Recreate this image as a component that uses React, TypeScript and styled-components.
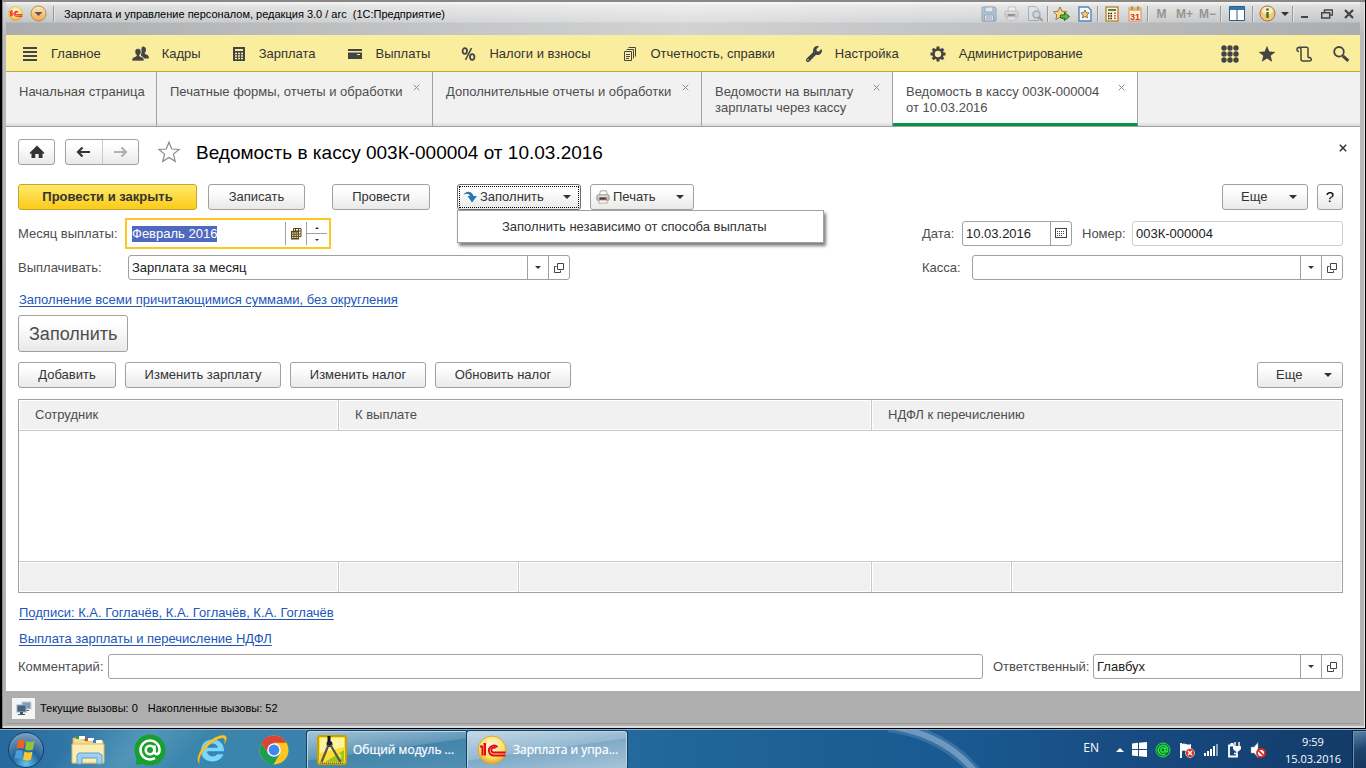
import React, { useEffect, useRef } from 'react';
import styled, { createGlobalStyle, css } from 'styled-components';
import { FaWrench } from 'react-icons/fa';

const GlobalStyle = createGlobalStyle`
  * { box-sizing: border-box; }
  body { margin: 0; background: #000; }
  body, button, input, select, table {
    font-family: "Liberation Sans", Arial, sans-serif;
    font-size: 13px;
    line-height: 16px;
    color: #333;
  }
  button, input, select { margin: 0; padding: 0; }
  svg { display: block; flex: none; }
`;

const Page = styled.div`
  display: flex;
  flex-direction: column;
  min-height: 100vh;
`;

/* ---------- window frame ---------- */

const Window = styled.div`
  flex: 1;
  display: flex;
  flex-direction: column;
  padding: 2px 5px 4px 4px;
  border: solid #000;
  border-width: 0 1px 1px 2px;
  background: linear-gradient(#d8d9da, #b9babc 36px, #b2afb0);
  box-shadow: inset 0 2px 0 #8b8688, inset 1px 0 0 #8b8688, inset -1px 0 0 #e2e2e2, inset 0 -2px 0 #dcdcdc;
`;

const TitleBar = styled.header`
  display: flex;
  align-items: center;
  height: 33px;
  padding: 0 1px 10px 1px;
  background:
    linear-gradient(90deg, rgba(255, 255, 255, 0) 0%, rgba(255, 255, 255, 0.45) 50%, rgba(255, 255, 255, 0) 100%),
    linear-gradient(#f4f5f5 0, #dcdddd 4px, #d0d1d2 12px, #c2c4c5 20px, #acadaf 21px, #acadaf 100%);
`;

const BarDivider = styled.span`
  width: 2px;
  height: 16px;
  margin: 0 1px;
  border-left: 1px solid #999a9d;
  border-right: 1px solid #e4e4e5;
`;

const WindowTitle = styled.h1`
  flex: 1;
  margin: 0;
  padding-left: 8px;
  font-size: 11px;
  font-weight: 400;
  color: #000;
  white-space: pre;
  overflow: hidden;
`;

const TitleButton = styled.button<{ $w?: number; $faded?: boolean }>`
  display: flex;
  align-items: center;
  justify-content: center;
  width: ${p => p.$w ?? 23}px;
  height: 20px;
  border: 0;
  background: none;
  font-size: 12px;
  font-weight: 700;
  color: #9b948e;
  opacity: ${p => (p.$faded ? 0.45 : 1)};
`;

/* ---------- section menu ---------- */

const SectionBar = styled.nav`
  display: flex;
  align-items: center;
  gap: 31px;
  height: 37px;
  padding: 1px 10px 0 16px;
  background: #fbed9e;
  border-bottom: 1px solid #bfa834;
`;

const SectionLink = styled.a`
  display: flex;
  align-items: center;
  gap: 13px;
  color: #333;
  text-decoration: none;
  white-space: nowrap;
`;

const SectionTools = styled.div`
  display: flex;
  gap: 19px;
  margin-left: auto;
`;

const IconButton = styled.button`
  display: flex;
  align-items: center;
  justify-content: center;
  min-width: 18px;
  height: 18px;
  border: 0;
  background: none;
`;

/* ---------- page tabs ---------- */

const TabBar = styled.div`
  display: flex;
  height: 55px;
  background: linear-gradient(#f1f1f1 50px, #dadada);
  border-bottom: 1px solid #a0a0a0;
`;

const Tab = styled.div<{ $w: number; $active?: boolean; $fixed?: boolean }>`
  display: flex;
  justify-content: space-between;
  flex: 0 1 ${p => p.$w}px;
  padding: 12px ${p => (p.$fixed ? 11 : 12)}px 0 13px;
  border-right: 1px solid #a0a0a0;
  color: #4d4d4d;
  ${p => p.$active && css`
    background: #fff;
    border-bottom: 3px solid #009646;
  `}
`;

const TabTitle = styled.span`
  white-space: pre;
`;

const CloseButton = styled.button`
  width: 7px;
  height: 7px;
  border: 0;
  background: none;
`;

/* ---------- document form ---------- */

const Form = styled.main`
  flex: 1;
  display: flex;
  flex-direction: column;
  padding: 12px 17px 12px 12px;
  background: #fff;
`;

const Row = styled.div<{ $top?: number; $gap?: number }>`
  display: flex;
  align-items: center;
  gap: ${p => p.$gap ?? 9}px;
  margin-top: ${p => p.$top ?? 0}px;
`;

const HeadRow = styled(Row)`
  margin-right: -4px;
`;

const DocClose = styled(CloseButton)`
  width: 8px;
  height: 16px;
  padding-bottom: 8px;
`;

const Spacer = styled.span<{ $w?: number }>`
  flex: ${p => (p.$w ? `0 0 ${p.$w}px` : '1')};
`;

const buttonFace = css`
  border: 1px solid #a0a0a0;
  border-radius: 3px;
  background: linear-gradient(#fff 20%, #e9e9e9);
`;

const Button = styled.button<{ $w: number; $pressed?: boolean; $primary?: boolean; $split?: boolean }>`
  display: flex;
  align-items: center;
  justify-content: ${p => (p.$split ? 'flex-start' : 'center')};
  gap: 3px;
  width: ${p => p.$w}px;
  height: 26px;
  padding: ${p => (p.$split ? '0 9px 0 5px' : '0')};
  ${buttonFace}
  white-space: nowrap;
  ${p => p.$primary && css`
    font-weight: 700;
    border-color: #c9a32a;
    background: linear-gradient(#ffe96a, #fbcb1a);
  `}
  ${p => p.$pressed && css`
    border-color: #6e6e6e;
    outline: 1px dotted #000;
    outline-offset: -3px;
  `}
`;

const MoreButton = styled(Button)`
  padding: 0 10px 0 18px;
  justify-content: space-between;
`;

const HelpButton = styled(Button)`
  font-size: 15px;
  color: #000;
`;

const BigButton = styled.button`
  align-self: flex-start;
  height: 37px;
  margin-top: 7px;
  padding: 0 10px;
  ${buttonFace}
  font-size: 18px;
  line-height: 22px;
  color: #4d4d4d;
`;

const ButtonLabel = styled.span<{ $grow?: boolean }>`
  ${p => p.$grow && css`
    flex: 1;
    text-align: left;
  `}
`;

const HomeButton = styled.button`
  display: flex;
  align-items: center;
  justify-content: center;
  width: 37px;
  height: 26px;
  ${buttonFace}
`;

const NavPair = styled.div`
  display: flex;
  width: 74px;
  height: 26px;
  margin: 0 9px 0 1px;
  ${buttonFace}
`;

const NavHalf = styled.button`
  flex: 1;
  display: flex;
  align-items: center;
  justify-content: center;
  border: 0;
  background: none;
  & + & { border-left: 1px solid #c8c8c8; }
`;

const DocTitle = styled.h2`
  flex: 1;
  margin: 0 0 0 6px;
  padding-top: 2px;
  font-size: 19px;
  line-height: 24px;
  font-weight: 400;
  color: #000;
`;

const MenuAnchor = styled.div`
  position: relative;
`;

const DropMenu = styled.div`
  position: absolute;
  z-index: 2;
  top: 26px;
  left: 0;
  width: 367px;
  border: 1px solid #a0a0a0;
  background: #fff;
  box-shadow: 2px 3px 3px rgba(0, 0, 0, 0.5);
`;

const MenuItem = styled.button`
  display: block;
  width: 100%;
  height: 31px;
  padding: 0 44px;
  border: 0;
  background: none;
  text-align: left;
  white-space: nowrap;
`;

const Label = styled.label<{ $w?: number }>`
  width: ${p => (p.$w ? `${p.$w}px` : 'auto')};
  color: #4d4d4d;
  white-space: nowrap;
`;

const FieldBox = styled.div<{ $w?: number; $muted?: boolean; $active?: boolean }>`
  display: flex;
  flex: ${p => (p.$w ? 'none' : 1)};
  width: ${p => (p.$w ? `${p.$w}px` : 'auto')};
  height: 25px;
  border: 1px solid ${p => (p.$muted ? '#d0d0d0' : '#a0a0a0')};
  border-radius: 3px;
  background: #fff;
  ${p => p.$active && css`
    height: 31px;
    padding: 2px;
    border: 2px solid #fcc721;
    border-radius: 0;
  `}
`;

const fieldText = css`
  flex: 1;
  min-width: 0;
  width: 0;
  padding: 0 3px;
  border: 0;
  outline: 0;
  background: none;
  color: #222;
  appearance: none;
  &::selection { background: #5069c0; color: #fff; }
`;

const TextInput = styled.input`${fieldText}`;
const SelectInput = styled.select`${fieldText}`;

const FieldButton = styled.button`
  display: flex;
  align-items: center;
  justify-content: center;
  width: 21px;
  border: 0;
  border-left: 1px solid #a0a0a0;
  background: none;
`;

const Spinner = styled.div`
  display: flex;
  flex-direction: column;
  width: 21px;
  border-left: 1px solid #a0a0a0;
`;

const SpinButton = styled.button`
  flex: 1;
  display: flex;
  align-items: center;
  justify-content: center;
  border: 0;
  background: none;
  & + & { border-top: 1px solid #a0a0a0; }
`;

const FormLink = styled.a<{ $top: number }>`
  align-self: flex-start;
  margin: ${p => p.$top}px 0 0 1px;
  color: #2156b8;
  text-decoration: underline;
  text-underline-offset: 2px;
`;

/* ---------- employees table ---------- */

const Table = styled.table`
  width: 100%;
  margin-top: 11px;
  table-layout: fixed;
  border-collapse: separate;
  border-spacing: 0;
  border: 1px solid #a0a0a0;
`;

const Col = styled.col<{ $w?: number }>`
  width: ${p => (p.$w ? `${p.$w}px` : 'auto')};
`;

const HeadCell = styled.th`
  height: 31px;
  padding: 0 16px;
  border-bottom: 1px solid #c8c8c8;
  background: #f1f1f1;
  box-shadow: inset 0 0 0 1px #fff;
  font-weight: 400;
  text-align: left;
  color: #4d4d4d;
  & + & { border-left: 1px solid #c8c8c8; }
`;

const EmptyCell = styled.td`
  height: 130px;
  padding: 0;
`;

const FootCell = styled.td`
  height: 31px;
  padding: 0;
  border-top: 1px solid #c8c8c8;
  background: #f0f0f0;
  box-shadow: inset 0 0 0 1px #fff;
  & + & { border-left: 1px solid #c8c8c8; }
`;

/* ---------- status bar ---------- */

const StatusBar = styled.footer`
  display: flex;
  align-items: center;
  gap: 10px;
  height: 33px;
  padding: 2px 6px 0;
  background: #aeaeae;
  border-bottom: 1px solid #9a9a9a;
  font-size: 11px;
  color: #000;
`;

const StatusIcon = styled.span`
  display: flex;
  align-items: center;
  justify-content: center;
  width: 23px;
  height: 21px;
  margin-right: -5px;
  background: #f5f5f5;
`;

/* ---------- taskbar ---------- */

const Taskbar = styled.div`
  display: flex;
  align-items: center;
  height: 40px;
  border-top: 1px solid #7fb0cf;
  background:
    linear-gradient(135deg, transparent 60px, rgba(150, 200, 220, 0.25) 110px, transparent 150px),
    linear-gradient(90deg, #26699d 0%, #3c86ae 10%, #3a82ab 24%, #246a9c 45%, #1c5f94 60%, #1a5992 70%, #174a80 84%, #123a67 100%);
  font-family: "Open Sans", "Noto Sans", sans-serif;
  font-size: 12px;
  color: #fff;
`;

const Launchers = styled.div`
  display: flex;
  align-items: center;
  gap: 26px;
  padding: 0 15px 0 8px;
`;

const TaskIcon = styled.button`
  display: flex;
  align-items: center;
  justify-content: center;
  width: 36px;
  height: 38px;
  border: 0;
  background: none;
`;

const TaskButton = styled.button<{ $active?: boolean }>`
  display: flex;
  align-items: center;
  gap: 6px;
  width: 160px;
  height: 38px;
  padding: 0 9px;
  border: 1px solid #bcd5e4;
  border-radius: 2px;
  outline: 1px solid #143f60;
  background: ${p => (p.$active
    ? 'linear-gradient(172deg, #c3d8e6 0%, #94b9d1 48%, #7faac7 50%, #a5c4d8 100%)'
    : 'linear-gradient(172deg, #a5c5d8 0%, #6198b8 48%, #4585ab 50%, #5190b3 100%)')};
  font-family: inherit;
  font-size: 12px;
  color: #fff;
  text-shadow: 0 0 1px rgba(255, 255, 255, 0.6);
  white-space: nowrap;
`;

const Swoosh = styled.div`
  flex: 1;
  align-self: stretch;
  display: flex;
  justify-content: flex-end;
  padding-right: 95px;
  overflow: hidden;
`;

const Tray = styled.div`
  display: flex;
  align-items: center;
  gap: 8px;
`;

const Language = styled.span`
  margin: 0 9px 4px 0;
`;

const Clock = styled.time`
  width: 62px;
  margin-left: 8px;
  text-align: center;
  font-size: 11px;
  line-height: 17px;
`;

const ShowDesktop = styled.button`
  width: 14px;
  height: 40px;
  border: 1px solid #0b2747;
  border-right: 0;
  background: linear-gradient(160deg, #5d84a8, #1d4570 50%, #15345b);
  box-shadow: inset 1px 1px 0 #6d8fb0;
`;

/* ---------- drawings ---------- */

const ink = '#444';

const OneC = ({ size }: { size: number }) => (
  <svg width={size} height={size} viewBox="0 0 30 30">
    <defs>
      <radialGradient id="oneC" cx="0.5" cy="0.35" r="0.7">
        <stop offset="0" stopColor="#fffbe0" />
        <stop offset="0.6" stopColor="#fbe069" />
        <stop offset="1" stopColor="#dd9a16" />
      </radialGradient>
    </defs>
    <circle cx="15" cy="15" r="14" fill="url(#oneC)" stroke="#d9a63c" />
    <path d="M3 11.500h2.500v9M6.500 9h1.500v11.500" fill="none" stroke="#e1061b" strokeWidth="2" />
    <path d="M20.500 12.200a5 5 0 1 0-3.500 8.300h11.500M18.500 13.200a2.500 2.500 0 1 0-1.500 4.300h11.500" fill="none" stroke="#e1061b" strokeWidth="1.900" />
  </svg>
);

const RoundArrow = () => (
  <svg width="17" height="17" viewBox="0 0 17 17">
    <defs>
      <linearGradient id="roundArrow" x2="0" y2="1">
        <stop offset="0" stopColor="#fbe7c5" />
        <stop offset="1" stopColor="#f0a84a" />
      </linearGradient>
    </defs>
    <circle cx="8.500" cy="8.500" r="7.500" fill="url(#roundArrow)" stroke="#b98a50" />
    <path d="M4.500 7h8l-4 4z" fill="#5d564e" />
  </svg>
);

const FloppyIcon = () => (
  <svg width="16" height="16" viewBox="0 0 16 16">
    <path d="M1 1h13l1 1v13H1z" fill="#7ea3c4" stroke="#41688f" />
    <path d="M4 1h8v5H4zM3.500 9h9v6h-9z" fill="#e9f0f6" stroke="#41688f" />
    <path d="M5 11h6M5 13h6" stroke="#41688f" />
  </svg>
);

const PrinterIcon = ({ size = 15 }: { size?: number }) => (
  <svg width={size} height={size} viewBox="0 0 16 16">
    <path d="M4 6l1-5h7l1 5z" fill="#fff" stroke="#9a9a9a" />
    <rect x="1" y="5.500" width="14" height="6.500" rx="1.500" fill="#c4c0bc" stroke="#99928c" />
    <path d="M2 7h12" stroke="#f2f2f2" />
    <rect x="4" y="8.500" width="8" height="3" fill="#4c3a33" />
    <path d="M4 11.500h8l1 3.500H3z" fill="#f6f6f6" stroke="#aaa" />
    <path d="M10.500 9.500h2" stroke="#e06030" strokeWidth="1.500" />
  </svg>
);

const PreviewIcon = () => (
  <svg width="16" height="16" viewBox="0 0 16 16">
    <path d="M1.500.500h7l3 3v11h-10z" fill="#dbe5ee" stroke="#5b7ea1" />
    <circle cx="9.500" cy="8.500" r="3.500" fill="#b9d3e6" stroke="#666" strokeWidth="1.400" />
    <path d="M12 11l3.500 4" stroke="#8a5a35" strokeWidth="2.400" />
  </svg>
);

const AddStarIcon = () => (
  <svg width="17" height="16" viewBox="0 0 17 16">
    <path d="M7 1l2 4.200 4.600.600-3.400 3.100.9 4.600L7 11.300 2.900 13.500l.9-4.600L.500 5.800 5 5.200z" fill="#f9d27c" stroke="#9c7646" />
    <path d="M7.500 9h4V6.500l5 4-5 4V12h-4z" fill="#5dbb3a" stroke="#1f6f1c" />
  </svg>
);

const StarPageIcon = () => (
  <svg width="14" height="16" viewBox="0 0 14 16">
    <path d="M1 1h9l3 3v11H1z" fill="#f4f9fd" stroke="#5486b4" strokeWidth="1.400" />
    <path d="M7 4l1.200 2.700 2.900.300-2.200 2 .6 2.900L7 10.400l-2.500 1.500.6-2.900-2.200-2 2.900-.3z" fill="#f9d27c" stroke="#8a6539" strokeWidth="0.900" />
  </svg>
);

const CalcIcon = () => (
  <svg width="14" height="16" viewBox="0 0 14 16">
    <rect x="1" y="1" width="12" height="14" fill="#fdf3cf" stroke="#b98649" strokeWidth="1.400" />
    <rect x="3" y="3" width="8" height="2" fill="#4f8a4a" />
    <path d="M3 7.500h5M3 10h5M3 12.500h5" stroke="#222" strokeWidth="1.500" strokeDasharray="1.500 1" />
    <path d="M10 6.500v7" stroke="#e03a20" strokeWidth="1.600" strokeDasharray="1.500 1" />
  </svg>
);

const Calendar31Icon = () => (
  <svg width="14" height="16" viewBox="0 0 14 16">
    <rect x="1" y="2" width="12" height="13" fill="#fff3da" stroke="#cf9457" />
    <path d="M1 2h12v3H1z" fill="#f0b266" />
    <path d="M4 0v4M10 0v4" stroke="#94663a" />
    <text x="7" y="14" textAnchor="middle" fontFamily="Liberation Sans" fontWeight="700" fontSize="9" fill="#e0301a">31</text>
  </svg>
);

const PanelsIcon = () => (
  <svg width="16" height="15" viewBox="0 0 16 15">
    <path d="M.500.500h15v14H.500z" fill="#fff" stroke="#2c5c88" />
    <path d="M1 2.500h14" stroke="#3c75a8" strokeWidth="3" />
    <path d="M8 3v11" stroke="#2c5c88" />
  </svg>
);

const InfoIcon = () => (
  <svg width="17" height="17" viewBox="0 0 17 17">
    <circle cx="8.500" cy="8.500" r="7.500" fill="#f8c777" stroke="#99733f" />
    <ellipse cx="8.500" cy="5.500" rx="5.500" ry="3.800" fill="#fde9c4" />
    <path d="M8.500 7v6" stroke="#2b7d22" strokeWidth="2.400" />
    <circle cx="8.500" cy="4.500" r="1.300" fill="#2b7d22" />
  </svg>
);

const CrossIcon = ({ size = 7, color = '#8a8a8a', weight = 1 }: { size?: number; color?: string; weight?: number }) => (
  <svg width={size} height={size} viewBox="0 0 7 7">
    <path d="M.700.700l5.600 5.600M6.300.700L.700 6.300" stroke={color} strokeWidth={weight} />
  </svg>
);

const Caret = ({ w = 8, up = false, color = '#333' }: { w?: number; up?: boolean; color?: string }) => (
  <svg width={w} height={Math.ceil(w / 2)} viewBox="0 0 8 4">
    <path d={up ? 'M0 4h8L4 0z' : 'M0 0h8L4 4z'} fill={color} />
  </svg>
);

const LinesIcon = () => (
  <svg width="16" height="16" viewBox="0 0 16 16">
    <path d="M1 2h14M1 6h14M1 10h14M1 14h14" stroke={ink} strokeWidth="2" />
  </svg>
);

const PeopleIcon = () => (
  <svg width="17" height="16" viewBox="0 0 17 16" fill={ink}>
    <path d="M11 .500c2 0 3 1.500 3 3.300 0 1.400-.6 2.400-1.200 3v1l3 1.500c.8.500 1 1 1 3.200h-4.500L9 9.500l.5-6.800C9.500 1.500 10 .500 11 .500z" />
    <path d="M6 2.500c2 0 3.100 1.300 3.100 3.300 0 1.500-.7 2.600-1.400 3.200v1l3.300 1.600c.9.500 1 1.300 1 3.400H0c0-2.100.2-2.900 1-3.400L4.300 10V9C3.600 8.400 2.900 7.300 2.900 5.800c0-2 1.100-3.300 3.100-3.300z" stroke="#fbed9e" strokeWidth="0.700" />
  </svg>
);

const AbacusIcon = () => (
  <svg width="14" height="16" viewBox="0 0 14 16">
    <path d="M1 1h12v14H1z" fill={ink} />
    <path d="M3 3h8v2H3z" fill="#fbed9e" />
    <path d="M3 7.500h8M3 10h8M3 12.500h8" stroke="#fbed9e" strokeWidth="1.700" strokeDasharray="2 1" />
  </svg>
);

const CardIcon = () => (
  <svg width="16" height="16" viewBox="0 0 16 16">
    <path d="M1 3h14v2H1zM1 6.500h14V13H1z" fill={ink} />
    <path d="M10 8.500h3" stroke="#fbed9e" />
  </svg>
);

const PercentIcon = () => (
  <svg width="15" height="16" viewBox="0 0 15 16" fill="none" stroke={ink} strokeWidth="1.800">
    <ellipse cx="3.800" cy="5" rx="2.200" ry="2.800" />
    <ellipse cx="11.200" cy="11" rx="2.200" ry="2.800" />
    <path d="M10.500 2.200L4.500 13.800" strokeWidth="1.500" />
  </svg>
);

const PapersIcon = () => (
  <svg width="16" height="16" viewBox="0 0 16 16" fill="none" stroke={ink}>
    <path d="M2.500 5.500h7v9h-7z" />
    <path d="M4.500 3.500h7v9M6.500 1.500h7v9" />
    <path d="M4 8.500h4M4 10.500h4M4 12.500h3" />
  </svg>
);

const GearIcon = () => (
  <svg width="16" height="16" viewBox="-8 -8 16 16">
    <circle r="4.500" fill="none" stroke={ink} strokeWidth="2.600" />
    {[0, 45, 90, 135, 180, 225, 270, 315].map(a => (
      <rect key={a} x="-1.500" y="-7.500" width="3" height="3" fill={ink} transform={`rotate(${a})`} />
    ))}
  </svg>
);

const GridIcon = () => (
  <svg width="18" height="18" viewBox="0 0 18 18" fill={ink}>
    {[3, 9, 15].map(y => [3, 9, 15].map(x => <circle key={`${x}-${y}`} cx={x} cy={y} r="2.700" />))}
  </svg>
);

const starPath = 'M9 .800l2.300 5.700 6.100.400-4.700 3.900 1.500 6L9 13.500l-5.200 3.300 1.500-6L.600 6.900l6.100-.4z';

const StarIcon = () => (
  <svg width="18" height="18" viewBox="0 0 18 18"><path d={starPath} fill={ink} /></svg>
);

const StarOutlineIcon = () => (
  <svg width="24" height="24" viewBox="-1 -1 20 20"><path d={starPath} fill="none" stroke="#8a8a8a" strokeWidth="1" /></svg>
);

const ScrollIcon = () => (
  <svg width="18" height="18" viewBox="0 0 18 18" fill="none" stroke={ink} strokeWidth="1.500">
    <path d="M4 6.500a2 2 0 1 1 2-2.300V14a2 2 0 0 0 2 2h7.500" />
    <path d="M4 2.200h7.500A1.500 1.500 0 0 1 13 3.700V12.500" />
    <path d="M13 13a1.600 1.600 0 1 1 2.500 3" />
  </svg>
);

const SearchIcon = () => (
  <svg width="18" height="18" viewBox="0 0 18 18" fill="none" stroke={ink}>
    <circle cx="7" cy="6.800" r="4.800" strokeWidth="1.800" />
    <path d="M10.800 10.800l5.500 5" strokeWidth="3" />
  </svg>
);

const HomeIcon = () => (
  <svg width="16" height="14" viewBox="0 0 16 14" fill="#333">
    <path d="M8 .500L15.500 8l-1.200 1-.8-.7V13H9.700V9H6.300v4H2.500V8.300l-.8.700L.500 8z" />
  </svg>
);

const ArrowIcon = ({ right = false }: { right?: boolean }) => (
  <svg width="15" height="12" viewBox="0 0 15 12" fill="none" stroke={right ? '#b0b0b0' : '#333'} strokeWidth="2.200">
    <path d={right ? 'M1 6h12M8.500 1.500L13 6l-4.500 4.500' : 'M14 6H2M6.500 1.500L2 6l4.500 4.500'} />
  </svg>
);

const FillIcon = () => (
  <svg width="14" height="14" viewBox="0 0 14 14">
    <path d="M.500 5C1.500 1.500 8.500-.500 10.500 6H14l-5 6.500L4.500 6H7C6 3.500 3 3 .500 5z" fill="#2878b4" />
  </svg>
);

const MonthGridIcon = () => (
  <svg width="12" height="12" viewBox="0 0 12 12">
    <path d="M3.500.500h7.500v8H3.500z" fill="#fff" stroke="#5c4410" />
    <path d="M5.500 1v7M8.500 1v7M4 3h7M4 6h7" stroke="#5c4410" />
    <path d="M1 3h8v8.500H1z" fill="#5c4410" />
    <path d="M2 5h6M2 7.200h6M2 9.400h6" stroke="#fff" strokeDasharray="1.500 .8" />
  </svg>
);

const DateIcon = () => (
  <svg width="12" height="11" viewBox="0 0 12 11">
    <rect x="0.500" y="0.500" width="11" height="9" fill="#fff" stroke="#444" />
    <path d="M2 3.500h8M2 5.500h8M2 7.500h5" stroke="#444" strokeDasharray="1 1" />
  </svg>
);

const OpenIcon = () => (
  <svg width="10" height="10" viewBox="0 0 10 10" fill="none" stroke="#444">
    <path d="M3.500.500h6v6h-6z" />
    <path d="M2.500 3.500h-2v6h6v-2" />
  </svg>
);

const MonitorsIcon = () => (
  <svg width="16" height="15" viewBox="0 0 16 15">
    <rect x="6" y="1" width="9" height="7" fill="#7d9bb3" stroke="#c8d0d6" />
    <path d="M9 9h4v1H9z" fill="#667" />
    <rect x="1" y="4" width="9" height="7" fill="#43637f" stroke="#9fb0bd" />
    <path d="M4 11h3v2h2v1H2v-1h2z" fill="#555" />
  </svg>
);

const StartOrb = () => (
  <svg width="38" height="38" viewBox="0 0 38 38">
    <defs>
      <radialGradient id="orb" cx="0.5" cy="0.9" r="0.9">
        <stop offset="0" stopColor="#5fc7ec" />
        <stop offset="0.45" stopColor="#22639b" />
        <stop offset="1" stopColor="#7fa3bf" />
      </radialGradient>
    </defs>
    <circle cx="19" cy="19" r="17.500" fill="url(#orb)" stroke="#123d66" />
    <path d="M9.500 18C10 13 11 9.500 12 9c2-1 4.500-.500 6 .500L16.500 18c-2-1.200-4.500-1.200-7 0z" fill="#e8622c" />
    <path d="M19.500 10c2.500 1.200 5 1.200 8-.300L26 18.500c-2.500 1.200-5.500 1.200-8 0z" fill="#93c23d" />
    <path d="M9 20c2.500-1.200 5-1.200 7 0l-1.500 8c-2-1.200-4.500-1.200-7 0z" fill="#4b9fd8" />
    <path d="M17.500 20.500c2.500 1.200 5.500 1.200 8 0L24 28.500c-2.500 1.200-5 1.200-8 0z" fill="#fbc92f" />
  </svg>
);

const FolderIcon = () => (
  <svg width="34" height="30" viewBox="0 0 34 30">
    <path d="M2 3h10l2 3h18v22H2z" fill="#f3dd92" stroke="#cfae5b" />
    <path d="M5 1h9v3H5z" fill="#fff" /><path d="M5 1h3v3H5z" fill="#3f9a3f" />
    <path d="M14 3h9v3h-9z" fill="#fff" /><path d="M14 3h3v3h-3z" fill="#d64b35" />
    <path d="M22 5h9v3h-9z" fill="#fff" /><path d="M22 5h3v3h-3z" fill="#3b7fd0" />
    <path d="M1 9h32v19H1z" fill="#fbeeb5" stroke="#d9bd6d" />
    <path d="M6 29v-9l2-2h20l3 2v9h-5v-6H11v6z" fill="#9fd0ee" stroke="#5f9fc9" />
  </svg>
);

const AgentIcon = ({ size }: { size: number }) => (
  <svg width={size} height={size} viewBox="0 0 32 32">
    <circle cx="16" cy="16" r="15.500" fill="#17a02c" />
    <path d="M3 20L2 31l10-2z" fill="#17a02c" />
    <g fill="none" stroke="#fff" strokeWidth="2.600">
      <circle cx="16" cy="16" r="4.300" />
      <path d="M20.500 11.500v6c0 4 5 3.500 5-1.500 0-5.500-4.500-9.500-9.500-9.500S6.500 10.500 6.500 16s4.500 9.500 9.500 9.500c2 0 3.500-.500 5-1.300" />
    </g>
  </svg>
);

const TrayAgentIcon = () => (
  <svg width="16" height="16" viewBox="0 0 16 16" fill="none" stroke="#28e04a" strokeWidth="1.500">
    <circle cx="8" cy="8" r="7" fill="#0c6b2a" strokeWidth="1" />
    <circle cx="8" cy="8" r="2.200" />
    <path d="M10.300 5.500v3c0 2.300 2.400 2 2.400-.500a4.700 4.700 0 1 0-2.200 4" />
  </svg>
);

const ExplorerIcon = () => (
  <svg width="32" height="32" viewBox="0 0 32 32">
    <path d="M28.500 17.800H11.500c.4 2.700 2.500 4.200 5.100 4.200 2.100 0 3.600-.700 4.600-2.200h6.900c-1.800 5-6.200 8.200-11.600 8.200C9.300 28 4.500 23 4.500 16.500S9.500 5 16.500 5c7.200 0 12.300 5 12 12.800zm-7.200-4.600c-.5-2-2.200-3.200-4.700-3.200s-4.300 1.200-5 3.200z" fill="#7fd6f8" stroke="#1f84c6" strokeWidth="0.900" />
    <path d="M3.500 29.500C-1 26 4 14 13 7.500 20 2 28-.500 30 2.500c1.300 2-.300 5.500-1.600 7.500.6-2.500.8-4.800-.5-5.600-2-1.300-7.500.900-13 5.100C6 16.300 2 24.500 3.500 29.500z" fill="#f8c928" stroke="#d99a12" strokeWidth="0.500" />
  </svg>
);

const ChromeIcon = () => (
  <svg width="30" height="30" viewBox="0 0 30 30">
    <circle cx="15" cy="15" r="14.500" fill="#fbc723" />
    <path d="M2.400 7.800A14.500 14.500 0 0 1 27.600 7.800H15L9 18.500z" fill="#db4437" />
    <path d="M2.400 7.800A14.500 14.500 0 0 0 14.500 29.500L21 18.500 9 18.500z" fill="#1c9d58" />
    <circle cx="15" cy="15" r="6.800" fill="#fff" />
    <circle cx="15" cy="15" r="5.400" fill="#4285f4" />
  </svg>
);

const DesignerIcon = () => (
  <svg width="30" height="30" viewBox="0 0 30 30">
    <rect x="1" y="1" width="28" height="28" rx="2" fill="#fbdf33" stroke="#c9a000" strokeWidth="2" />
    <path d="M3 3h24v9L3 18z" fill="#fff3a0" />
    <path d="M8 27L27 15v12z" fill="#9fc423" />
    <circle cx="22" cy="21" r="2.500" fill="#e7e82f" />
    <path d="M12 1v6" stroke="#111" strokeWidth="3" />
    <circle cx="12.500" cy="9" r="3" fill="#222" />
    <path d="M11.500 10L4.500 27M13.500 10l10 17" stroke="#555" strokeWidth="2.200" />
    <path d="M3 28h23" stroke="#444" strokeDasharray="1 1" />
  </svg>
);

const WinIcon = () => (
  <svg width="15" height="15" viewBox="0 0 15 15" fill="#fff">
    <path d="M0 1.500L6 .800V7H0zM7 .700L15 0v7H7zM0 8h6v6.200l-6-.7zM7 8h8v7l-8-.8z" />
  </svg>
);

const FlagIcon = () => (
  <svg width="16" height="16" viewBox="0 0 16 16">
    <path d="M2 1v15" stroke="#fff" strokeWidth="2" />
    <path d="M3 2c3-2 5 2 9 0v7c-4 2-6-2-9 0z" fill="#fff" />
    <circle cx="11" cy="11" r="4.500" fill="#dc2a1e" stroke="#fff" strokeWidth="0.600" />
    <path d="M9 9l4 4M13 9l-4 4" stroke="#fff" strokeWidth="1.500" />
  </svg>
);

const SignalIcon = () => (
  <svg width="16" height="14" viewBox="0 0 16 14" fill="#fff">
    <path d="M1 10h2v3H1zM4 8h2v5H4zM7 6h2v7H7zM10 3h2v10h-2z" />
    <path d="M13 1h2v12h-2z" fill="#8aa3bd" />
  </svg>
);

const PowerIcon = () => (
  <svg width="15" height="16" viewBox="0 0 15 16" fill="none" stroke="#fff">
    <path d="M7 3.500H2v11h8V12M3.500 2h3" strokeWidth="1.800" />
    <path d="M8 0v4M12 0v4" strokeWidth="1.400" />
    <path d="M6.500 4.500h7V7l-2 2h-3l-2-2z" fill="#fff" />
    <path d="M10 9v2.500H7" strokeWidth="1.500" />
  </svg>
);

const MutedIcon = () => (
  <svg width="16" height="16" viewBox="0 0 16 16">
    <path d="M1 5h3l4-4.500v15L4 11H1z" fill="#fff" stroke="#999" strokeWidth="0.500" />
    <circle cx="11" cy="11" r="4" fill="#fff" stroke="#dc2a1e" strokeWidth="1.800" />
    <path d="M8.300 8.300l5.400 5.400" stroke="#dc2a1e" strokeWidth="1.800" />
  </svg>
);

/* ---------- content ---------- */

const sections = [
  { title: 'Главное', icon: <LinesIcon /> },
  { title: 'Кадры', icon: <PeopleIcon /> },
  { title: 'Зарплата', icon: <AbacusIcon /> },
  { title: 'Выплаты', icon: <CardIcon /> },
  { title: 'Налоги и взносы', icon: <PercentIcon /> },
  { title: 'Отчетность, справки', icon: <PapersIcon /> },
  { title: 'Настройка', icon: <FaWrench size={16} color={ink} /> },
  { title: 'Администрирование', icon: <GearIcon /> },
];

const tabs = [
  { title: 'Начальная страница', width: 151 },
  { title: 'Печатные формы, отчеты и обработки', width: 276, closable: true },
  { title: 'Дополнительные отчеты и обработки', width: 269, closable: true },
  { title: 'Ведомости на выплату\nзарплаты через кассу', width: 191, closable: true },
  { title: 'Ведомость в кассу 003К-000004\nот 10.03.2016', width: 245, closable: true, active: true },
];

const ComboButtons = () => (
  <>
    <FieldButton aria-label="Выбрать"><Caret w={6} /></FieldButton>
    <FieldButton aria-label="Открыть"><OpenIcon /></FieldButton>
  </>
);

export default function App() {
  const monthRef = useRef<HTMLInputElement>(null);

  useEffect(() => {
    monthRef.current?.focus();
    monthRef.current?.select();
  }, []);

  return (
    <Page>
      <GlobalStyle />
      <Window>
        <TitleBar>
          <TitleButton $w={17} aria-label="1С"><OneC size={15} /></TitleButton>
          <TitleButton $w={28} aria-label="Меню"><RoundArrow /></TitleButton>
          <BarDivider />
          <WindowTitle>{'Зарплата и управление персоналом, редакция 3.0 / arc  (1С:Предприятие)'}</WindowTitle>
          <TitleButton $faded aria-label="Сохранить"><FloppyIcon /></TitleButton>
          <TitleButton $faded aria-label="Печать"><PrinterIcon /></TitleButton>
          <TitleButton $faded aria-label="Просмотр"><PreviewIcon /></TitleButton>
          <BarDivider />
          <TitleButton aria-label="В избранное"><AddStarIcon /></TitleButton>
          <TitleButton aria-label="Избранное"><StarPageIcon /></TitleButton>
          <BarDivider />
          <TitleButton aria-label="Калькулятор"><CalcIcon /></TitleButton>
          <TitleButton aria-label="Календарь"><Calendar31Icon /></TitleButton>
          <BarDivider />
          <TitleButton>M</TitleButton>
          <TitleButton>M+</TitleButton>
          <TitleButton>M−</TitleButton>
          <BarDivider />
          <TitleButton $w={28} aria-label="Панели"><PanelsIcon /></TitleButton>
          <BarDivider />
          <TitleButton $w={24} aria-label="Справка"><InfoIcon /></TitleButton>
          <TitleButton $w={12} aria-label="Ещё о программе"><Caret w={8} /></TitleButton>
          <BarDivider />
          <TitleButton $w={20} aria-label="Свернуть">
            <svg width="10" height="10"><path d="M1 8h7" stroke="#444" strokeWidth="2" /></svg>
          </TitleButton>
          <TitleButton $w={23} aria-label="Восстановить">
            <svg width="12" height="10" fill="none" stroke="#444"><path d="M3.500 3V1h8v5H9" strokeWidth="1.500" /><path d="M.700 3.800h8V9h-8z" strokeWidth="1.500" /></svg>
          </TitleButton>
          <TitleButton $w={21} aria-label="Закрыть"><CrossIcon size={10} color="#444" weight={1.600} /></TitleButton>
        </TitleBar>

        <SectionBar>
          {sections.map(s => (
            <SectionLink key={s.title} href="#">{s.icon}{s.title}</SectionLink>
          ))}
          <SectionTools>
            <IconButton aria-label="Все функции"><GridIcon /></IconButton>
            <IconButton aria-label="Избранное"><StarIcon /></IconButton>
            <IconButton aria-label="История"><ScrollIcon /></IconButton>
            <IconButton aria-label="Поиск"><SearchIcon /></IconButton>
          </SectionTools>
        </SectionBar>

        <TabBar>
          {tabs.map(t => (
            <Tab key={t.title} $w={t.width} $active={t.active} $fixed={!t.closable}>
              <TabTitle>{t.title}</TabTitle>
              {t.closable && <CloseButton aria-label="Закрыть"><CrossIcon /></CloseButton>}
            </Tab>
          ))}
        </TabBar>

        <Form>
          <HeadRow>
            <HomeButton aria-label="Домой"><HomeIcon /></HomeButton>
            <NavPair>
              <NavHalf aria-label="Назад"><ArrowIcon /></NavHalf>
              <NavHalf aria-label="Вперёд"><ArrowIcon right /></NavHalf>
            </NavPair>
            <IconButton aria-label="В избранное"><StarOutlineIcon /></IconButton>
            <DocTitle>Ведомость в кассу 003К-000004 от 10.03.2016</DocTitle>
            <DocClose aria-label="Закрыть документ"><CrossIcon size={8} color="#333" weight={1.300} /></DocClose>
          </HeadRow>

          <Row $top={19}>
            <Row $gap={27}>
              <Row $gap={11}>
                <Button $w={179} $primary>Провести и закрыть</Button>
                <Button $w={97}>Записать</Button>
              </Row>
              <Button $w={98}>Провести</Button>
              <Row>
                <MenuAnchor>
                  <Button $w={124} $split $pressed aria-haspopup="menu" aria-expanded="true">
                    <FillIcon />
                    <ButtonLabel $grow>Заполнить</ButtonLabel>
                    <Caret />
                  </Button>
                  <DropMenu role="menu">
                    <MenuItem role="menuitem">Заполнить независимо от способа выплаты</MenuItem>
                  </DropMenu>
                </MenuAnchor>
                <Button $w={104} $split>
                  <PrinterIcon size={14} />
                  <ButtonLabel $grow>Печать</ButtonLabel>
                  <Caret />
                </Button>
              </Row>
            </Row>
            <Spacer />
            <MoreButton $w={86}>Еще<Caret /></MoreButton>
            <HelpButton $w={26}>?</HelpButton>
          </Row>

          <Row $top={8} $gap={0}>
            <Label $w={107} htmlFor="month">Месяц выплаты:</Label>
            <FieldBox $w={206} $active>
              <TextInput id="month" ref={monthRef} defaultValue="Февраль 2016" />
              <FieldButton aria-label="Выбрать месяц"><MonthGridIcon /></FieldButton>
              <Spinner>
                <SpinButton aria-label="Следующий месяц"><Caret w={4} up /></SpinButton>
                <SpinButton aria-label="Предыдущий месяц"><Caret w={4} /></SpinButton>
              </Spinner>
            </FieldBox>
            <Spacer />
            <Label $w={40} htmlFor="date">Дата:</Label>
            <FieldBox $w={110}>
              <TextInput id="date" defaultValue="10.03.2016" />
              <FieldButton aria-label="Выбрать дату"><DateIcon /></FieldButton>
            </FieldBox>
            <Spacer $w={10} />
            <Label $w={50} htmlFor="number">Номер:</Label>
            <FieldBox $w={211} $muted>
              <TextInput id="number" defaultValue="003К-000004" readOnly />
            </FieldBox>
          </Row>

          <Row $top={6} $gap={0}>
            <Label $w={110} htmlFor="pay">Выплачивать:</Label>
            <FieldBox $w={442}>
              <SelectInput id="pay"><option>Зарплата за месяц</option></SelectInput>
              <ComboButtons />
            </FieldBox>
            <Spacer />
            <Label $w={50} htmlFor="cash">Касса:</Label>
            <FieldBox $w={371}>
              <SelectInput id="cash"><option></option></SelectInput>
              <ComboButtons />
            </FieldBox>
          </Row>

          <FormLink href="#" $top={12}>Заполнение всеми причитающимися суммами, без округления</FormLink>

          <BigButton>Заполнить</BigButton>

          <Row $top={10}>
            <Button $w={98}>Добавить</Button>
            <Button $w={156}>Изменить зарплату</Button>
            <Button $w={136}>Изменить налог</Button>
            <Button $w={136}>Обновить налог</Button>
            <Spacer />
            <MoreButton $w={86}>Еще<Caret /></MoreButton>
          </Row>

          <Table>
            <colgroup>
              <Col $w={319} />
              <Col $w={180} />
              <Col $w={353} />
              <Col $w={140} />
              <Col />
            </colgroup>
            <thead>
              <tr>
                <HeadCell>Сотрудник</HeadCell>
                <HeadCell colSpan={2}>К выплате</HeadCell>
                <HeadCell colSpan={2}>НДФЛ к перечислению</HeadCell>
              </tr>
            </thead>
            <tbody>
              <tr><EmptyCell colSpan={5} /></tr>
            </tbody>
            <tfoot>
              <tr><FootCell /><FootCell /><FootCell /><FootCell /><FootCell /></tr>
            </tfoot>
          </Table>

          <FormLink href="#" $top={12}>Подписи: К.А. Гоглачёв, К.А. Гоглачёв, К.А. Гоглачёв</FormLink>
          <FormLink href="#" $top={10}>Выплата зарплаты и перечисление НДФЛ</FormLink>

          <Row $top={7} $gap={0}>
            <Label $w={90} htmlFor="comment">Комментарий:</Label>
            <FieldBox>
              <TextInput id="comment" />
            </FieldBox>
            <Spacer $w={10} />
            <Label $w={100} htmlFor="owner">Ответственный:</Label>
            <FieldBox $w={250}>
              <SelectInput id="owner"><option>Главбух</option></SelectInput>
              <ComboButtons />
            </FieldBox>
          </Row>
        </Form>

        <StatusBar>
          <StatusIcon><MonitorsIcon /></StatusIcon>
          <span>Текущие вызовы: 0</span>
          <span>Накопленные вызовы: 52</span>
        </StatusBar>
      </Window>

      <Taskbar>
        <Launchers>
          <TaskIcon aria-label="Пуск"><StartOrb /></TaskIcon>
          <TaskIcon aria-label="Проводник"><FolderIcon /></TaskIcon>
          <TaskIcon aria-label="Агент"><AgentIcon size={32} /></TaskIcon>
          <TaskIcon aria-label="Internet Explorer"><ExplorerIcon /></TaskIcon>
          <TaskIcon aria-label="Chrome"><ChromeIcon /></TaskIcon>
        </Launchers>
        <TaskButton><DesignerIcon />Общий модуль ...</TaskButton>
        <TaskButton $active><OneC size={30} />Зарплата и упра...</TaskButton>
        <Swoosh>
          <svg width="100" height="40" viewBox="0 0 100 40">
            <path d="M0-4Q60 4 92 48" fill="none" stroke="#7fa6cb" strokeOpacity="0.300" strokeWidth="12" />
            <path d="M0-4Q60 4 92 48" fill="none" stroke="#a3c0dc" strokeOpacity="0.500" strokeWidth="6" />
          </svg>
        </Swoosh>
        <Tray>
          <Language>EN</Language>
          <Caret w={8} up color="#fff" />
          <WinIcon />
          <TrayAgentIcon />
          <FlagIcon />
          <SignalIcon />
          <PowerIcon />
          <MutedIcon />
          <Clock>9:59<br />15.03.2016</Clock>
          <ShowDesktop aria-label="Показать рабочий стол" />
        </Tray>
      </Taskbar>
    </Page>
  );
}
